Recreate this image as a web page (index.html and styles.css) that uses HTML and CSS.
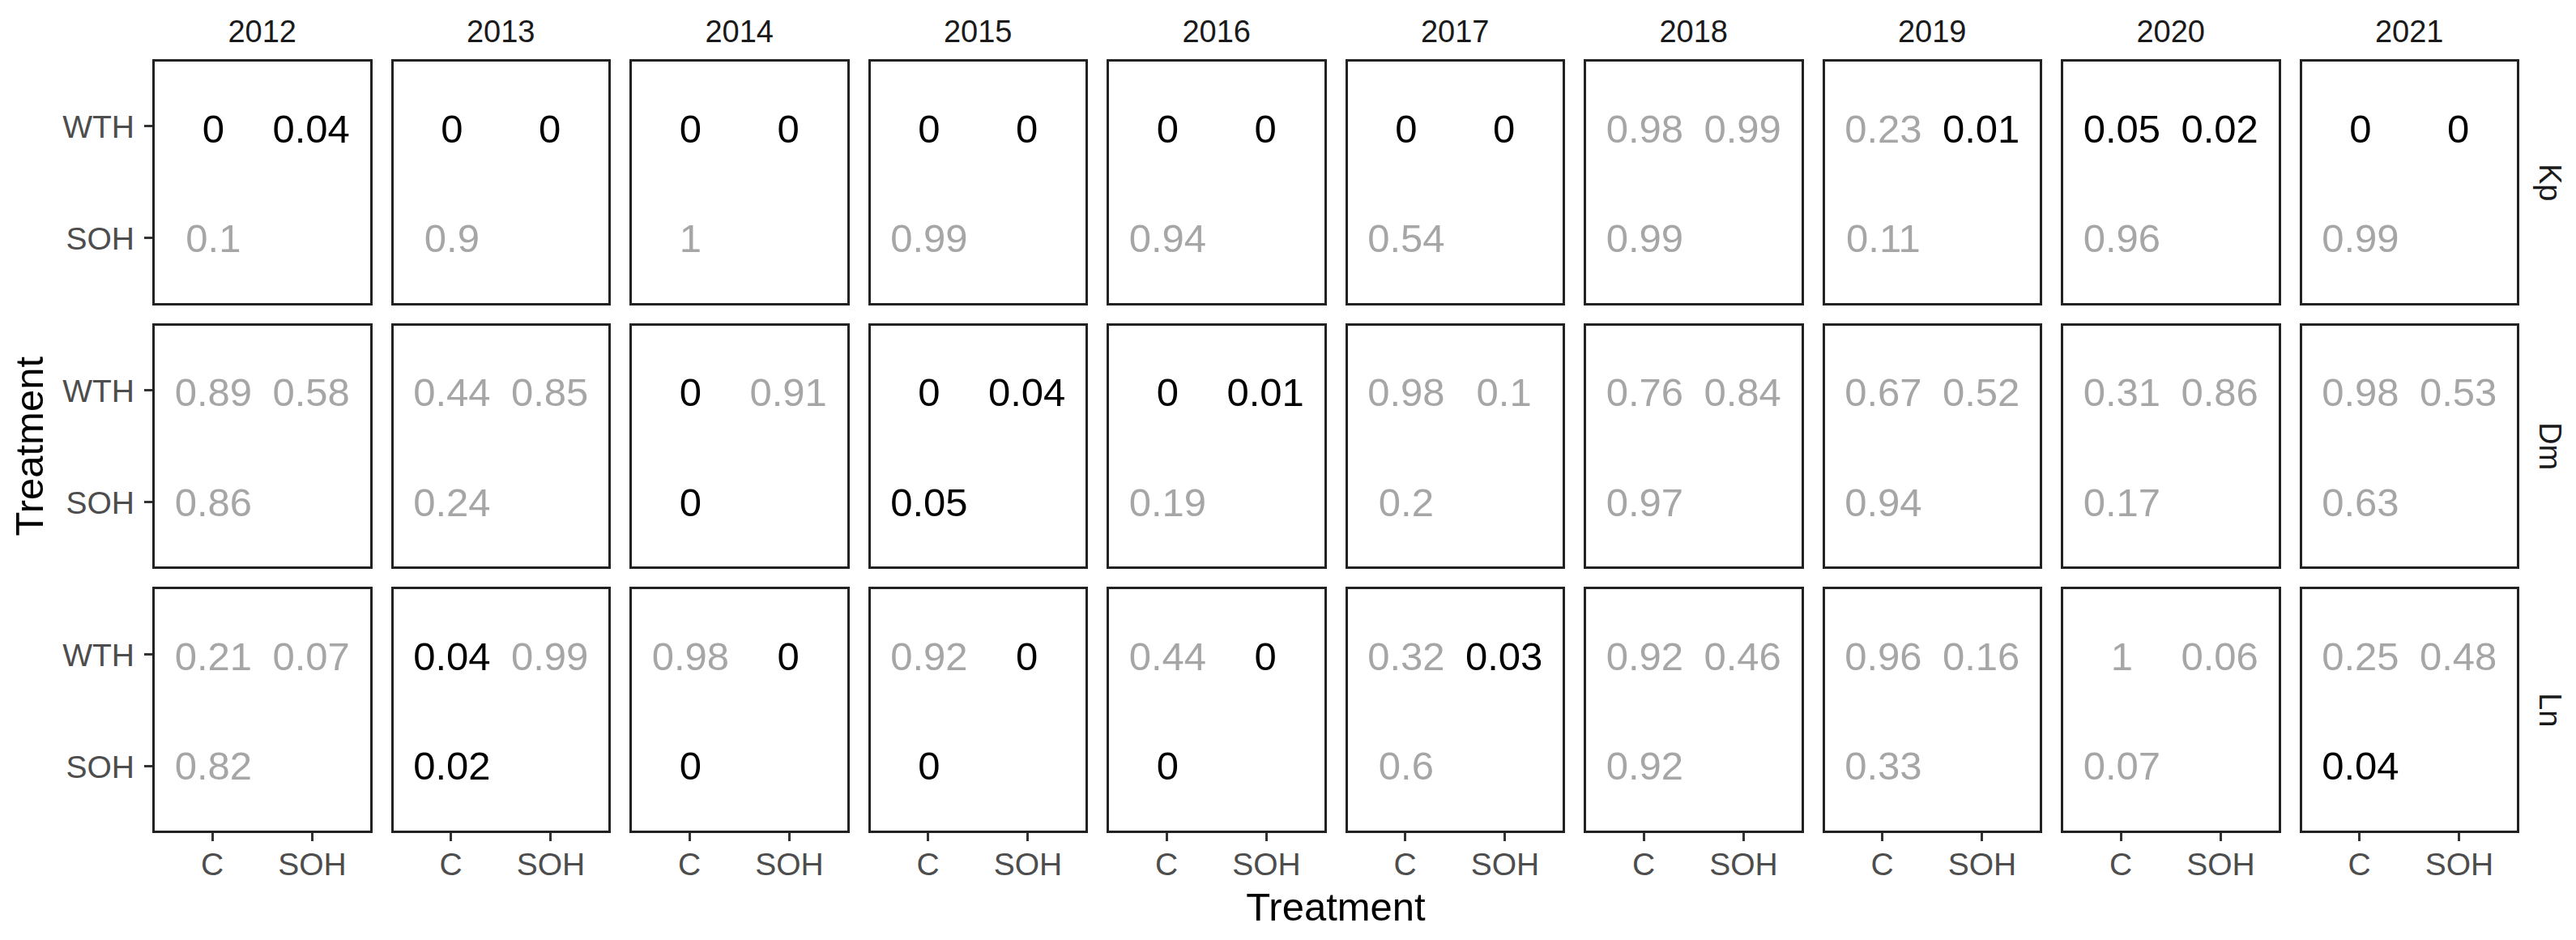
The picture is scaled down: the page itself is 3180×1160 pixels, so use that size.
FILE: index.html
```html
<!DOCTYPE html>
<html>
<head>
<meta charset="utf-8">
<link rel="stylesheet" href="styles.css">
</head>
<body>
<div class="plot">
  <div class="strips-top">
    <div class="strip">2012</div><div class="strip">2013</div><div class="strip">2014</div><div class="strip">2015</div><div class="strip">2016</div>
    <div class="strip">2017</div><div class="strip">2018</div><div class="strip">2019</div><div class="strip">2020</div><div class="strip">2021</div>
  </div>

  <div class="left">
    <div class="ytitle-wrap"><div class="ytitle">Treatment</div></div>
    <div class="ylabels">
      <div class="ygroup"><div class="ytick-row r2"><span class="ylab">WTH</span><span class="ytick"></span></div><div class="ytick-row r4"><span class="ylab">SOH</span><span class="ytick"></span></div></div>
      <div class="ygroup"><div class="ytick-row r2"><span class="ylab">WTH</span><span class="ytick"></span></div><div class="ytick-row r4"><span class="ylab">SOH</span><span class="ytick"></span></div></div>
      <div class="ygroup"><div class="ytick-row r2"><span class="ylab">WTH</span><span class="ytick"></span></div><div class="ytick-row r4"><span class="ylab">SOH</span><span class="ytick"></span></div></div>
    </div>
  </div>

  <div class="panels">
    <!-- Kp -->
    <div class="panel"><span class="v a sig">0</span><span class="v b sig">0.04</span><span class="v c">0.1</span></div>
    <div class="panel"><span class="v a sig">0</span><span class="v b sig">0</span><span class="v c">0.9</span></div>
    <div class="panel"><span class="v a sig">0</span><span class="v b sig">0</span><span class="v c">1</span></div>
    <div class="panel"><span class="v a sig">0</span><span class="v b sig">0</span><span class="v c">0.99</span></div>
    <div class="panel"><span class="v a sig">0</span><span class="v b sig">0</span><span class="v c">0.94</span></div>
    <div class="panel"><span class="v a sig">0</span><span class="v b sig">0</span><span class="v c">0.54</span></div>
    <div class="panel"><span class="v a">0.98</span><span class="v b">0.99</span><span class="v c">0.99</span></div>
    <div class="panel"><span class="v a">0.23</span><span class="v b sig">0.01</span><span class="v c">0.11</span></div>
    <div class="panel"><span class="v a sig">0.05</span><span class="v b sig">0.02</span><span class="v c">0.96</span></div>
    <div class="panel"><span class="v a sig">0</span><span class="v b sig">0</span><span class="v c">0.99</span></div>
    <!-- Dm -->
    <div class="panel"><span class="v a">0.89</span><span class="v b">0.58</span><span class="v c">0.86</span></div>
    <div class="panel"><span class="v a">0.44</span><span class="v b">0.85</span><span class="v c">0.24</span></div>
    <div class="panel"><span class="v a sig">0</span><span class="v b">0.91</span><span class="v c sig">0</span></div>
    <div class="panel"><span class="v a sig">0</span><span class="v b sig">0.04</span><span class="v c sig">0.05</span></div>
    <div class="panel"><span class="v a sig">0</span><span class="v b sig">0.01</span><span class="v c">0.19</span></div>
    <div class="panel"><span class="v a">0.98</span><span class="v b">0.1</span><span class="v c">0.2</span></div>
    <div class="panel"><span class="v a">0.76</span><span class="v b">0.84</span><span class="v c">0.97</span></div>
    <div class="panel"><span class="v a">0.67</span><span class="v b">0.52</span><span class="v c">0.94</span></div>
    <div class="panel"><span class="v a">0.31</span><span class="v b">0.86</span><span class="v c">0.17</span></div>
    <div class="panel"><span class="v a">0.98</span><span class="v b">0.53</span><span class="v c">0.63</span></div>
    <!-- Ln -->
    <div class="panel"><span class="v a">0.21</span><span class="v b">0.07</span><span class="v c">0.82</span></div>
    <div class="panel"><span class="v a sig">0.04</span><span class="v b">0.99</span><span class="v c sig">0.02</span></div>
    <div class="panel"><span class="v a">0.98</span><span class="v b sig">0</span><span class="v c sig">0</span></div>
    <div class="panel"><span class="v a">0.92</span><span class="v b sig">0</span><span class="v c sig">0</span></div>
    <div class="panel"><span class="v a">0.44</span><span class="v b sig">0</span><span class="v c sig">0</span></div>
    <div class="panel"><span class="v a">0.32</span><span class="v b sig">0.03</span><span class="v c">0.6</span></div>
    <div class="panel"><span class="v a">0.92</span><span class="v b">0.46</span><span class="v c">0.92</span></div>
    <div class="panel"><span class="v a">0.96</span><span class="v b">0.16</span><span class="v c">0.33</span></div>
    <div class="panel"><span class="v a">1</span><span class="v b">0.06</span><span class="v c">0.07</span></div>
    <div class="panel"><span class="v a">0.25</span><span class="v b">0.48</span><span class="v c sig">0.04</span></div>
  </div>

  <div class="strips-right">
    <div class="rstrip"><span class="rtext">Kp</span></div>
    <div class="rstrip"><span class="rtext">Dm</span></div>
    <div class="rstrip"><span class="rtext">Ln</span></div>
  </div>

  <div class="bottom">
    <div class="xaxis">
      <div class="xgroup"><div class="xt c2"><span class="xtick"></span><span class="xlab">C</span></div><div class="xt c4"><span class="xtick"></span><span class="xlab">SOH</span></div></div>
      <div class="xgroup"><div class="xt c2"><span class="xtick"></span><span class="xlab">C</span></div><div class="xt c4"><span class="xtick"></span><span class="xlab">SOH</span></div></div>
      <div class="xgroup"><div class="xt c2"><span class="xtick"></span><span class="xlab">C</span></div><div class="xt c4"><span class="xtick"></span><span class="xlab">SOH</span></div></div>
      <div class="xgroup"><div class="xt c2"><span class="xtick"></span><span class="xlab">C</span></div><div class="xt c4"><span class="xtick"></span><span class="xlab">SOH</span></div></div>
      <div class="xgroup"><div class="xt c2"><span class="xtick"></span><span class="xlab">C</span></div><div class="xt c4"><span class="xtick"></span><span class="xlab">SOH</span></div></div>
      <div class="xgroup"><div class="xt c2"><span class="xtick"></span><span class="xlab">C</span></div><div class="xt c4"><span class="xtick"></span><span class="xlab">SOH</span></div></div>
      <div class="xgroup"><div class="xt c2"><span class="xtick"></span><span class="xlab">C</span></div><div class="xt c4"><span class="xtick"></span><span class="xlab">SOH</span></div></div>
      <div class="xgroup"><div class="xt c2"><span class="xtick"></span><span class="xlab">C</span></div><div class="xt c4"><span class="xtick"></span><span class="xlab">SOH</span></div></div>
      <div class="xgroup"><div class="xt c2"><span class="xtick"></span><span class="xlab">C</span></div><div class="xt c4"><span class="xtick"></span><span class="xlab">SOH</span></div></div>
      <div class="xgroup"><div class="xt c2"><span class="xtick"></span><span class="xlab">C</span></div><div class="xt c4"><span class="xtick"></span><span class="xlab">SOH</span></div></div>
    </div>
    <div class="xtitle">Treatment</div>
  </div>
</div>
</body>
</html>
```

FILE: styles.css
```css
* { box-sizing: border-box; }
html, body {
  margin: 0;
  padding: 0;
  background: #ffffff;
}
body {
  width: 3180px;
  height: 1160px;
  overflow: hidden;
  font-family: "Liberation Sans", Arial, sans-serif;
}
.plot {
  display: grid;
  grid-template-columns: 188px 2922px 70px;
  grid-template-rows: 73px 955px 132px;
  width: 3180px;
  height: 1160px;
}

/* top strips */
.strips-top {
  grid-column: 2;
  grid-row: 1;
  display: grid;
  grid-template-columns: repeat(10, 1fr);
  column-gap: 23px;
}
.strip {
  text-align: center;
  font-size: 38px;
  line-height: 38px;
  padding-top: 20px;
  color: #1a1a1a;
}

/* left axis */
.left {
  grid-column: 1;
  grid-row: 2;
  display: flex;
}
.ytitle-wrap {
  width: 72px;
  padding-left: 12px;
  display: flex;
  align-items: center;
}
.ytitle {
  writing-mode: vertical-rl;
  transform: rotate(180deg);
  font-size: 49px;
  line-height: 49px;
  color: #000;
}
.ylabels {
  flex: 1;
  display: grid;
  grid-template-rows: repeat(3, 1fr);
  row-gap: 22px;
}
.ygroup {
  display: grid;
  grid-template-rows: 1fr 4fr 1fr 4fr 1fr;
}
.ytick-row {
  display: flex;
  align-items: center;
  justify-content: flex-end;
}
.ytick-row.r2 { grid-row: 2; }
.ytick-row.r4 { grid-row: 4; }
.ylab {
  font-size: 39px;
  line-height: 39px;
  color: #4d4d4d;
  margin-right: 12px;
  position: relative;
  top: 1px;
}
.ytick {
  width: 10px;
  height: 3px;
  background: #333333;
}

/* panels */
.panels {
  grid-column: 2;
  grid-row: 2;
  display: grid;
  grid-template-columns: repeat(10, 1fr);
  grid-template-rows: repeat(3, 1fr);
  column-gap: 23px;
  row-gap: 22px;
}
.panel {
  border: 3px solid #222222;
  background: #ffffff;
  display: grid;
  grid-template-columns: 1fr 4fr 1fr 4fr 1fr;
  grid-template-rows: 1fr 4fr 1fr 4fr 1fr;
}
.v {
  display: flex;
  align-items: center;
  justify-content: center;
  font-size: 49px;
  line-height: 49px;
  color: #a6a6a6;
  white-space: nowrap;
  position: relative;
  top: 2px;
}
.v.sig { color: #000000; }
.v.a { grid-column: 2; grid-row: 2; }
.v.b { grid-column: 4; grid-row: 2; }
.v.c { grid-column: 2; grid-row: 4; }

/* right strips */
.strips-right {
  grid-column: 3;
  grid-row: 2;
  display: grid;
  grid-template-rows: repeat(3, 1fr);
  row-gap: 22px;
}
.rstrip {
  display: flex;
  align-items: center;
  padding-left: 19px;
}
.rtext {
  writing-mode: vertical-rl;
  font-size: 38px;
  line-height: 38px;
  color: #1a1a1a;
}

/* bottom axis */
.bottom {
  grid-column: 2;
  grid-row: 3;
  display: flex;
  flex-direction: column;
}
.xaxis {
  display: grid;
  grid-template-columns: repeat(10, 1fr);
  column-gap: 23px;
}
.xgroup {
  display: grid;
  grid-template-columns: 1fr 4fr 1fr 4fr 1fr;
}
.xt {
  display: flex;
  flex-direction: column;
  align-items: center;
}
.xt.c2 { grid-column: 2; }
.xt.c4 { grid-column: 4; }
.xtick {
  width: 3px;
  height: 10px;
  background: #333333;
}
.xlab {
  margin-top: 9px;
  font-size: 39px;
  line-height: 39px;
  color: #4d4d4d;
  white-space: nowrap;
}
.xtitle {
  margin-top: 9px;
  text-align: center;
  font-size: 49px;
  line-height: 49px;
  color: #000;
}
```
